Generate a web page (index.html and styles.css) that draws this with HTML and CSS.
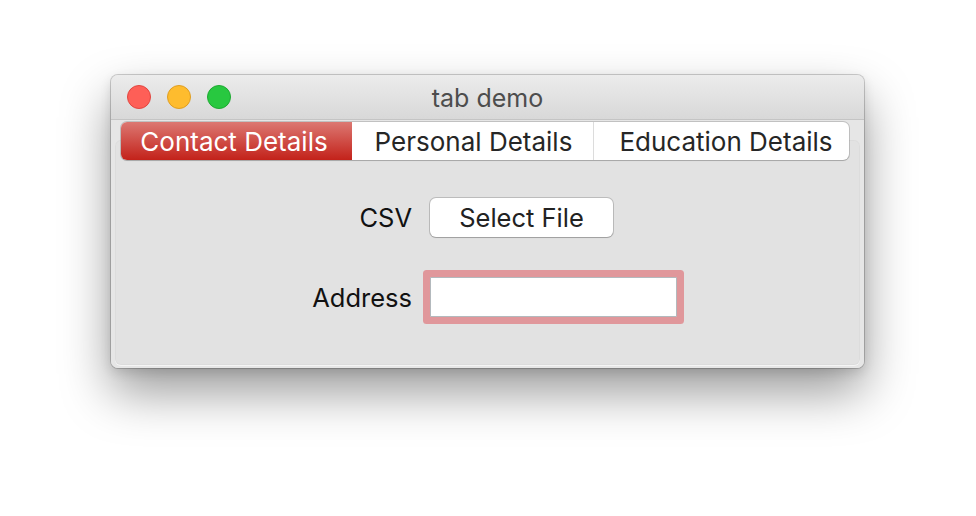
FILE: index.html
```html
<!DOCTYPE html>
<html>
<head>
<meta charset="utf-8">
<link rel="stylesheet" href="styles.css">
</head>
<body>
<div class="window">
  <div class="titlebar">
    <div class="lights">
      <span class="light red"></span>
      <span class="light yellow"></span>
      <span class="light green"></span>
    </div>
    <div class="title">tab demo</div>
  </div>
  <div class="body">
    <div class="tabs">
      <div class="tab active t1">Contact Details</div>
      <div class="tab t2">Personal Details</div>
      <div class="tab t3">Education Details</div>
    </div>
    <div class="pane">
      <div class="form">
        <div class="label">CSV</div>
        <div class="control"><button class="btn">Select File</button></div>
        <div class="label">Address</div>
        <div class="control"><div class="input"></div></div>
      </div>
    </div>
  </div>
</div>
</body>
</html>
```

FILE: styles.css
```css
html, body {
  margin: 0;
  padding: 0;
  background: #ffffff;
}
html {
  height: 100%;
}
body {
  min-height: 516px;
  box-sizing: border-box;
  padding: 75px 0 0 111px;
  font-family: Inter, "Liberation Sans", sans-serif;
}
.window {
  width: 753px;
  height: 293px;
  box-sizing: border-box;
  border-radius: 7px;
  background: #e3e3e3;
  box-shadow: 0 0 0 1px rgba(0,0,0,0.18), 0 24px 50px rgba(0,0,0,0.40), 0 4px 12px rgba(0,0,0,0.12);
  overflow: hidden;
  display: flex;
  flex-direction: column;
}
.titlebar {
  height: 44px;
  flex: none;
  position: relative;
  background: linear-gradient(#ececec, #d8d8d8);
  border-bottom: 1px solid #c4c4c4;
  display: flex;
  align-items: center;
  justify-content: center;
}
.lights {
  position: absolute;
  left: 16px;
  top: 10px;
  display: flex;
  gap: 16px;
}
.light {
  width: 24px;
  height: 24px;
  border-radius: 50%;
  box-sizing: border-box;
}
.red { background: #fe5f57; border: 1px solid #e14640; }
.yellow { background: #febc2e; border: 1px solid #df9e22; }
.green { background: #28c840; border: 1px solid #1ea932; }
.title {
  font-size: 25px;
  color: #4d4d4d;
  margin-left: 0;
  margin-top: 2px;
}
.body {
  flex: 1;
  display: flex;
  flex-direction: column;
  background: #e6e6e6;
  padding: 2px 4px 3px 4px;
}
.tabs {
  display: flex;
  margin-left: 6px;
  height: 38px;
  box-sizing: border-box;
  width: 728px;
  background: #ffffff;
  border-radius: 6px;
  box-shadow: 0 0 0 1px rgba(0,0,0,0.16), 0 1px 1px rgba(0,0,0,0.12);
  position: relative;
  z-index: 1;
  margin-bottom: -20px;
}
.tab {
  display: flex;
  align-items: center;
  justify-content: center;
  font-size: 26px;
  color: #262626;
  box-sizing: border-box;
}
.t1 { width: 231px; padding-right: 5px; }
.t2 { width: 242px; border-right: 1px solid #dcdcdc; padding-left: 2px; }
.t3 { width: 255px; padding-left: 9px; }
.tab.active {
  background: linear-gradient(#dc7872, #c3221a);
  color: #ffffff;
  border-radius: 6px 0 0 6px;
}
.pane {
  flex: 1;
  background: #e2e2e2;
  border-radius: 6px;
  box-shadow: inset 0 0 0 1px rgba(0,0,0,0.025), 0 1px 0 rgba(255,255,255,0.6);
  padding-top: 58px;
}
.form {
  display: grid;
  grid-template-columns: 297px auto;
  column-gap: 18px;
  row-gap: 40px;
  align-items: center;
}
.label {
  text-align: right;
  font-size: 25.5px;
  color: #111111;
}
.control {
  display: flex;
}
.btn {
  width: 183px;
  height: 39px;
  font-family: Inter, "Liberation Sans", sans-serif;
  font-size: 25.5px;
  color: #222222;
  background: #ffffff;
  border: none;
  border-radius: 6px;
  box-shadow: 0 0 0 1px rgba(0,0,0,0.17), 0 1px 1px rgba(0,0,0,0.15);
  padding: 0;
}
.input {
  width: 247px;
  height: 40px;
  box-sizing: border-box;
  background: #ffffff;
  border: 1px solid #b3b9bd;
  box-shadow: 0 0 0 7px #e0979b;
  border-radius: 1px;
  margin-top: 0;
}
```
